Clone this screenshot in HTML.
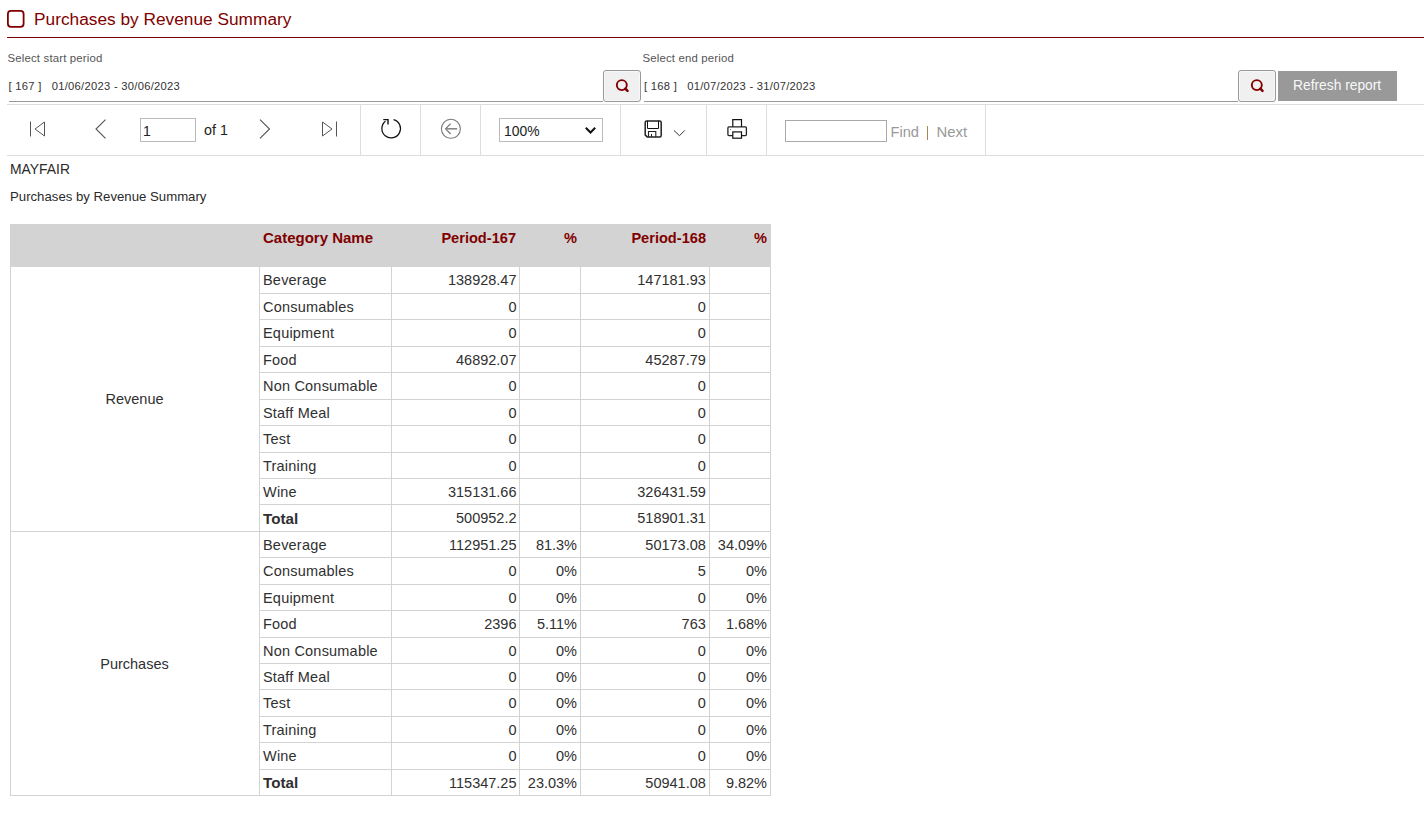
<!DOCTYPE html>
<html><head><meta charset="utf-8"><title>Purchases by Revenue Summary</title>
<style>
html,body{margin:0;padding:0;background:#fff;}
body{width:1424px;height:826px;position:relative;overflow:hidden;font-family:"Liberation Sans", sans-serif;}
</style></head><body>
<svg style="position:absolute;left:0px;top:0px" width="30" height="32" viewBox="0 0 30 32"><rect x="7.9" y="10.9" width="15.7" height="15.9" rx="3" fill="none" stroke="#800000" stroke-width="1.8"/></svg>
<div style="position:absolute;left:34px;top:11.36px;font-size:17.3px;line-height:17.3px;color:#800000;font-weight:normal;white-space:pre;">Purchases by Revenue Summary</div>
<div style="position:absolute;left:7px;top:37px;width:1417px;height:1px;background:#800000;"></div>
<div style="position:absolute;left:7.5px;top:53.35px;font-size:11.4px;line-height:11.4px;color:#555;font-weight:normal;white-space:pre;letter-spacing:0.17px;">Select start period</div>
<div style="position:absolute;left:8.5px;top:80.52px;font-size:11.2px;line-height:11.2px;color:#333;font-weight:normal;white-space:pre;letter-spacing:0.28px;">[ 167 ]   01/06/2023 - 30/06/2023</div>
<div style="position:absolute;left:9px;top:101px;width:594px;height:1px;background:#999;"></div>
<div style="position:absolute;left:603px;top:70px;width:36px;height:30px;border:1px solid #999;border-radius:3px;background:#f0f0f0;box-shadow:inset 0 0 0 1px #f8f8f8;"></div>
<svg style="position:absolute;left:603px;top:70px" width="38" height="32" viewBox="0 0 38 32"><circle cx="18.799999999999955" cy="15.099999999999994" r="5.0" fill="none" stroke="#800000" stroke-width="1.9"/><line x1="22.399999999999956" y1="18.699999999999996" x2="24.499999999999954" y2="20.799999999999994" stroke="#800000" stroke-width="2.6" stroke-linecap="round"/></svg>
<div style="position:absolute;left:642.5px;top:53.35px;font-size:11.4px;line-height:11.4px;color:#555;font-weight:normal;white-space:pre;letter-spacing:0.17px;">Select end period</div>
<div style="position:absolute;left:644px;top:80.52px;font-size:11.2px;line-height:11.2px;color:#333;font-weight:normal;white-space:pre;letter-spacing:0.28px;">[ 168 ]   01/07/2023 - 31/07/2023</div>
<div style="position:absolute;left:644px;top:101px;width:594px;height:1px;background:#999;"></div>
<div style="position:absolute;left:1238px;top:70px;width:36px;height:30px;border:1px solid #999;border-radius:3px;background:#f0f0f0;box-shadow:inset 0 0 0 1px #f8f8f8;"></div>
<svg style="position:absolute;left:1238px;top:70px" width="38" height="32" viewBox="0 0 38 32"><circle cx="18.799999999999955" cy="15.099999999999994" r="5.0" fill="none" stroke="#800000" stroke-width="1.9"/><line x1="22.399999999999956" y1="18.699999999999996" x2="24.499999999999954" y2="20.799999999999994" stroke="#800000" stroke-width="2.6" stroke-linecap="round"/></svg>
<div style="position:absolute;left:1278px;top:71px;width:119px;height:30px;background:#999;"></div>
<div style="position:absolute;left:1293px;top:79.02px;font-size:13.8px;line-height:13.8px;color:#f8f8f8;font-weight:normal;white-space:pre;">Refresh report</div>
<div style="position:absolute;left:7px;top:104px;width:1417px;height:1px;background:#ddd;"></div>
<div style="position:absolute;left:7px;top:155px;width:1417px;height:1px;background:#ddd;"></div>
<div style="position:absolute;left:360px;top:105px;width:1px;height:50px;background:#ddd;"></div>
<div style="position:absolute;left:420px;top:105px;width:1px;height:50px;background:#ddd;"></div>
<div style="position:absolute;left:480px;top:105px;width:1px;height:50px;background:#ddd;"></div>
<div style="position:absolute;left:620px;top:105px;width:1px;height:50px;background:#ddd;"></div>
<div style="position:absolute;left:706px;top:105px;width:1px;height:50px;background:#ddd;"></div>
<div style="position:absolute;left:766px;top:105px;width:1px;height:50px;background:#ddd;"></div>
<div style="position:absolute;left:985px;top:105px;width:1px;height:50px;background:#ddd;"></div>
<svg style="position:absolute;left:20px;top:110px" width="40" height="40" viewBox="0 0 40 40"><line x1="10.5" y1="11.5" x2="10.5" y2="26.5" stroke="#555" stroke-width="1"/><path d="M24.5 12 L15 19 L24.5 26 Z" fill="none" stroke="#555" stroke-width="1"/></svg>
<svg style="position:absolute;left:85px;top:110px" width="30" height="40" viewBox="0 0 30 40"><path d="M20.5 9.6 L11 19 L20.5 28.3" fill="none" stroke="#555" stroke-width="1.1"/></svg>
<svg style="position:absolute;left:250px;top:110px" width="30" height="40" viewBox="0 0 30 40"><path d="M10 9.6 L19.5 19 L10 28.3" fill="none" stroke="#555" stroke-width="1.1"/></svg>
<svg style="position:absolute;left:310px;top:110px" width="40" height="40" viewBox="0 0 40 40"><path d="M12.5 12 L22 19 L12.5 26 Z" fill="none" stroke="#555" stroke-width="1"/><line x1="26.5" y1="11.5" x2="26.5" y2="26.5" stroke="#555" stroke-width="1"/></svg>
<div style="position:absolute;left:140px;top:118px;width:54px;height:22px;border:1px solid #bbb;background:#fff;"></div>
<div style="position:absolute;left:143px;top:123.65px;font-size:14px;line-height:14px;color:#222;font-weight:normal;white-space:pre;">1</div>
<div style="position:absolute;left:204px;top:123.40px;font-size:14.3px;line-height:14.3px;color:#222;font-weight:normal;white-space:pre;">of 1</div>
<svg style="position:absolute;left:371px;top:109px" width="40" height="40" viewBox="0 0 40 40"><path d="M22.6 10.6 A9.3 9.3 0 1 1 14.5 12.2" fill="none" stroke="#111" stroke-width="1.25"/><path d="M12.3 10.6 L17 10.6 L17 15.5" fill="none" stroke="#111" stroke-width="1.4"/></svg>
<svg style="position:absolute;left:431px;top:109px" width="40" height="40" viewBox="0 0 40 40"><circle cx="19.9" cy="19.8" r="9.5" fill="none" stroke="#777" stroke-width="1.1"/><path d="M19.6 14.6 L14.6 19.8 L19.6 25" fill="none" stroke="#777" stroke-width="1.2"/><line x1="14.8" y1="19.8" x2="26.2" y2="19.8" stroke="#888" stroke-width="1.6"/></svg>
<div style="position:absolute;left:499px;top:118px;width:102px;height:22px;border:1px solid #bbb;background:#fff;"></div>
<div style="position:absolute;left:504px;top:124.53px;font-size:13.9px;line-height:13.9px;color:#222;font-weight:normal;white-space:pre;">100%</div>
<svg style="position:absolute;left:580px;top:120px" width="20" height="20" viewBox="0 0 20 20"><path d="M5.8 7.8 L10.5 12.5 L15.2 7.8" fill="none" stroke="#111" stroke-width="2"/></svg>
<svg style="position:absolute;left:640px;top:115px" width="26" height="26" viewBox="0 0 26 26"><path d="M6.7 5.9 H19.7 Q21.2 5.9 21.2 7.4 V20.4 Q21.2 21.9 19.7 21.9 H7.2 L5.2 19.9 V7.4 Q5.2 5.9 6.7 5.9 Z" fill="none" stroke="#222" stroke-width="1.5"/><path d="M7.5 5.9 V13.5 H18.5 V5.9" fill="none" stroke="#111" stroke-width="1"/><path d="M8.5 21.9 V16.5 H15.8 V21.9" fill="none" stroke="#222" stroke-width="1.1"/><line x1="11.5" y1="19" x2="11.5" y2="21.9" stroke="#222" stroke-width="1"/></svg>
<svg style="position:absolute;left:670px;top:125px" width="20" height="15" viewBox="0 0 20 15"><path d="M3.9 5.4 L9.5 10.7 L14.8 5.4" fill="none" stroke="#333" stroke-width="1"/></svg>
<svg style="position:absolute;left:720px;top:113px" width="35" height="30" viewBox="0 0 35 30"><path d="M12.8 13.9 V6.6 H21.5 V13.9" fill="none" stroke="#111" stroke-width="1.2"/><rect x="7.9" y="13.9" width="18.5" height="8.7" rx="1" fill="none" stroke="#222" stroke-width="1.3"/><rect x="12.8" y="18.9" width="8.7" height="6.3" fill="#fff" stroke="#111" stroke-width="1.2"/><circle cx="10.5" cy="16.5" r="0.5" fill="#555"/></svg>
<div style="position:absolute;left:785px;top:120px;width:100px;height:20px;border:1px solid #aaa;background:#fff;"></div>
<div style="position:absolute;left:890.5px;top:125.14px;font-size:14.6px;line-height:14.6px;color:#999;font-weight:normal;white-space:pre;">Find</div>
<div style="position:absolute;left:927px;top:126px;width:1.3px;height:13.5px;background:#a88850;"></div>
<div style="position:absolute;left:936.5px;top:124.89px;font-size:14.9px;line-height:14.9px;color:#999;font-weight:normal;white-space:pre;">Next</div>
<div style="position:absolute;left:10px;top:162.73px;font-size:13.9px;line-height:13.9px;color:#2a2a2a;font-weight:normal;white-space:pre;">MAYFAIR</div>
<div style="position:absolute;left:10px;top:190.33px;font-size:13.2px;line-height:13.2px;color:#2a2a2a;font-weight:normal;white-space:pre;">Purchases by Revenue Summary</div>
<div style="position:absolute;left:10px;top:224px;width:761px;height:43px;background:#d3d3d3;"></div>
<div style="position:absolute;left:259px;top:293px;width:512px;height:1px;background:#d3d3d3;"></div>
<div style="position:absolute;left:259px;top:319px;width:512px;height:1px;background:#d3d3d3;"></div>
<div style="position:absolute;left:259px;top:346px;width:512px;height:1px;background:#d3d3d3;"></div>
<div style="position:absolute;left:259px;top:372px;width:512px;height:1px;background:#d3d3d3;"></div>
<div style="position:absolute;left:259px;top:399px;width:512px;height:1px;background:#d3d3d3;"></div>
<div style="position:absolute;left:259px;top:425px;width:512px;height:1px;background:#d3d3d3;"></div>
<div style="position:absolute;left:259px;top:452px;width:512px;height:1px;background:#d3d3d3;"></div>
<div style="position:absolute;left:259px;top:478px;width:512px;height:1px;background:#d3d3d3;"></div>
<div style="position:absolute;left:259px;top:504px;width:512px;height:1px;background:#d3d3d3;"></div>
<div style="position:absolute;left:10px;top:531px;width:761px;height:1px;background:#d3d3d3;"></div>
<div style="position:absolute;left:259px;top:557px;width:512px;height:1px;background:#d3d3d3;"></div>
<div style="position:absolute;left:259px;top:584px;width:512px;height:1px;background:#d3d3d3;"></div>
<div style="position:absolute;left:259px;top:610px;width:512px;height:1px;background:#d3d3d3;"></div>
<div style="position:absolute;left:259px;top:637px;width:512px;height:1px;background:#d3d3d3;"></div>
<div style="position:absolute;left:259px;top:663px;width:512px;height:1px;background:#d3d3d3;"></div>
<div style="position:absolute;left:259px;top:689px;width:512px;height:1px;background:#d3d3d3;"></div>
<div style="position:absolute;left:259px;top:716px;width:512px;height:1px;background:#d3d3d3;"></div>
<div style="position:absolute;left:259px;top:742px;width:512px;height:1px;background:#d3d3d3;"></div>
<div style="position:absolute;left:259px;top:769px;width:512px;height:1px;background:#d3d3d3;"></div>
<div style="position:absolute;left:10px;top:795px;width:761px;height:1px;background:#d3d3d3;"></div>
<div style="position:absolute;left:10px;top:267px;width:1px;height:529px;background:#d3d3d3;"></div>
<div style="position:absolute;left:259px;top:267px;width:1px;height:529px;background:#d3d3d3;"></div>
<div style="position:absolute;left:391px;top:267px;width:1px;height:529px;background:#d3d3d3;"></div>
<div style="position:absolute;left:519px;top:267px;width:1px;height:529px;background:#d3d3d3;"></div>
<div style="position:absolute;left:580px;top:267px;width:1px;height:529px;background:#d3d3d3;"></div>
<div style="position:absolute;left:709px;top:267px;width:1px;height:529px;background:#d3d3d3;"></div>
<div style="position:absolute;left:770px;top:267px;width:1px;height:529px;background:#d3d3d3;"></div>
<div style="position:absolute;left:263px;top:230.30px;font-size:15.0px;line-height:15.0px;color:#800000;font-weight:bold;white-space:pre;">Category Name</div>
<div style="position:absolute;right:908px;text-align:right;top:230.64px;font-size:14.6px;line-height:14.6px;color:#800000;font-weight:bold;white-space:pre;">Period-167</div>
<div style="position:absolute;right:847px;text-align:right;top:230.64px;font-size:14.6px;line-height:14.6px;color:#800000;font-weight:bold;white-space:pre;">%</div>
<div style="position:absolute;right:718px;text-align:right;top:230.64px;font-size:14.6px;line-height:14.6px;color:#800000;font-weight:bold;white-space:pre;">Period-168</div>
<div style="position:absolute;right:657px;text-align:right;top:230.64px;font-size:14.6px;line-height:14.6px;color:#800000;font-weight:bold;white-space:pre;">%</div>
<div style="position:absolute;left:263px;top:273.43px;font-size:14.5px;line-height:14.5px;color:#303030;font-weight:normal;white-space:pre;letter-spacing:0.2px;">Beverage</div>
<div style="position:absolute;right:907.5px;text-align:right;top:273.43px;font-size:14.5px;line-height:14.5px;color:#303030;font-weight:normal;white-space:pre;">138928.47</div>
<div style="position:absolute;right:847px;text-align:right;top:273.43px;font-size:14.5px;line-height:14.5px;color:#303030;font-weight:normal;white-space:pre;"></div>
<div style="position:absolute;right:718.2px;text-align:right;top:273.43px;font-size:14.5px;line-height:14.5px;color:#303030;font-weight:normal;white-space:pre;">147181.93</div>
<div style="position:absolute;right:657px;text-align:right;top:273.43px;font-size:14.5px;line-height:14.5px;color:#303030;font-weight:normal;white-space:pre;"></div>
<div style="position:absolute;left:263px;top:299.93px;font-size:14.5px;line-height:14.5px;color:#303030;font-weight:normal;white-space:pre;letter-spacing:0.2px;">Consumables</div>
<div style="position:absolute;right:907.5px;text-align:right;top:299.93px;font-size:14.5px;line-height:14.5px;color:#303030;font-weight:normal;white-space:pre;">0</div>
<div style="position:absolute;right:847px;text-align:right;top:299.93px;font-size:14.5px;line-height:14.5px;color:#303030;font-weight:normal;white-space:pre;"></div>
<div style="position:absolute;right:718.2px;text-align:right;top:299.93px;font-size:14.5px;line-height:14.5px;color:#303030;font-weight:normal;white-space:pre;">0</div>
<div style="position:absolute;right:657px;text-align:right;top:299.93px;font-size:14.5px;line-height:14.5px;color:#303030;font-weight:normal;white-space:pre;"></div>
<div style="position:absolute;left:263px;top:326.43px;font-size:14.5px;line-height:14.5px;color:#303030;font-weight:normal;white-space:pre;letter-spacing:0.2px;">Equipment</div>
<div style="position:absolute;right:907.5px;text-align:right;top:326.43px;font-size:14.5px;line-height:14.5px;color:#303030;font-weight:normal;white-space:pre;">0</div>
<div style="position:absolute;right:847px;text-align:right;top:326.43px;font-size:14.5px;line-height:14.5px;color:#303030;font-weight:normal;white-space:pre;"></div>
<div style="position:absolute;right:718.2px;text-align:right;top:326.43px;font-size:14.5px;line-height:14.5px;color:#303030;font-weight:normal;white-space:pre;">0</div>
<div style="position:absolute;right:657px;text-align:right;top:326.43px;font-size:14.5px;line-height:14.5px;color:#303030;font-weight:normal;white-space:pre;"></div>
<div style="position:absolute;left:263px;top:352.93px;font-size:14.5px;line-height:14.5px;color:#303030;font-weight:normal;white-space:pre;letter-spacing:0.2px;">Food</div>
<div style="position:absolute;right:907.5px;text-align:right;top:352.93px;font-size:14.5px;line-height:14.5px;color:#303030;font-weight:normal;white-space:pre;">46892.07</div>
<div style="position:absolute;right:847px;text-align:right;top:352.93px;font-size:14.5px;line-height:14.5px;color:#303030;font-weight:normal;white-space:pre;"></div>
<div style="position:absolute;right:718.2px;text-align:right;top:352.93px;font-size:14.5px;line-height:14.5px;color:#303030;font-weight:normal;white-space:pre;">45287.79</div>
<div style="position:absolute;right:657px;text-align:right;top:352.93px;font-size:14.5px;line-height:14.5px;color:#303030;font-weight:normal;white-space:pre;"></div>
<div style="position:absolute;left:263px;top:379.43px;font-size:14.5px;line-height:14.5px;color:#303030;font-weight:normal;white-space:pre;letter-spacing:0.2px;">Non Consumable</div>
<div style="position:absolute;right:907.5px;text-align:right;top:379.43px;font-size:14.5px;line-height:14.5px;color:#303030;font-weight:normal;white-space:pre;">0</div>
<div style="position:absolute;right:847px;text-align:right;top:379.43px;font-size:14.5px;line-height:14.5px;color:#303030;font-weight:normal;white-space:pre;"></div>
<div style="position:absolute;right:718.2px;text-align:right;top:379.43px;font-size:14.5px;line-height:14.5px;color:#303030;font-weight:normal;white-space:pre;">0</div>
<div style="position:absolute;right:657px;text-align:right;top:379.43px;font-size:14.5px;line-height:14.5px;color:#303030;font-weight:normal;white-space:pre;"></div>
<div style="position:absolute;left:263px;top:405.93px;font-size:14.5px;line-height:14.5px;color:#303030;font-weight:normal;white-space:pre;letter-spacing:0.2px;">Staff Meal</div>
<div style="position:absolute;right:907.5px;text-align:right;top:405.93px;font-size:14.5px;line-height:14.5px;color:#303030;font-weight:normal;white-space:pre;">0</div>
<div style="position:absolute;right:847px;text-align:right;top:405.93px;font-size:14.5px;line-height:14.5px;color:#303030;font-weight:normal;white-space:pre;"></div>
<div style="position:absolute;right:718.2px;text-align:right;top:405.93px;font-size:14.5px;line-height:14.5px;color:#303030;font-weight:normal;white-space:pre;">0</div>
<div style="position:absolute;right:657px;text-align:right;top:405.93px;font-size:14.5px;line-height:14.5px;color:#303030;font-weight:normal;white-space:pre;"></div>
<div style="position:absolute;left:263px;top:432.43px;font-size:14.5px;line-height:14.5px;color:#303030;font-weight:normal;white-space:pre;letter-spacing:0.2px;">Test</div>
<div style="position:absolute;right:907.5px;text-align:right;top:432.43px;font-size:14.5px;line-height:14.5px;color:#303030;font-weight:normal;white-space:pre;">0</div>
<div style="position:absolute;right:847px;text-align:right;top:432.43px;font-size:14.5px;line-height:14.5px;color:#303030;font-weight:normal;white-space:pre;"></div>
<div style="position:absolute;right:718.2px;text-align:right;top:432.43px;font-size:14.5px;line-height:14.5px;color:#303030;font-weight:normal;white-space:pre;">0</div>
<div style="position:absolute;right:657px;text-align:right;top:432.43px;font-size:14.5px;line-height:14.5px;color:#303030;font-weight:normal;white-space:pre;"></div>
<div style="position:absolute;left:263px;top:458.93px;font-size:14.5px;line-height:14.5px;color:#303030;font-weight:normal;white-space:pre;letter-spacing:0.2px;">Training</div>
<div style="position:absolute;right:907.5px;text-align:right;top:458.93px;font-size:14.5px;line-height:14.5px;color:#303030;font-weight:normal;white-space:pre;">0</div>
<div style="position:absolute;right:847px;text-align:right;top:458.93px;font-size:14.5px;line-height:14.5px;color:#303030;font-weight:normal;white-space:pre;"></div>
<div style="position:absolute;right:718.2px;text-align:right;top:458.93px;font-size:14.5px;line-height:14.5px;color:#303030;font-weight:normal;white-space:pre;">0</div>
<div style="position:absolute;right:657px;text-align:right;top:458.93px;font-size:14.5px;line-height:14.5px;color:#303030;font-weight:normal;white-space:pre;"></div>
<div style="position:absolute;left:263px;top:484.93px;font-size:14.5px;line-height:14.5px;color:#303030;font-weight:normal;white-space:pre;letter-spacing:0.2px;">Wine</div>
<div style="position:absolute;right:907.5px;text-align:right;top:484.93px;font-size:14.5px;line-height:14.5px;color:#303030;font-weight:normal;white-space:pre;">315131.66</div>
<div style="position:absolute;right:847px;text-align:right;top:484.93px;font-size:14.5px;line-height:14.5px;color:#303030;font-weight:normal;white-space:pre;"></div>
<div style="position:absolute;right:718.2px;text-align:right;top:484.93px;font-size:14.5px;line-height:14.5px;color:#303030;font-weight:normal;white-space:pre;">326431.59</div>
<div style="position:absolute;right:657px;text-align:right;top:484.93px;font-size:14.5px;line-height:14.5px;color:#303030;font-weight:normal;white-space:pre;"></div>
<div style="position:absolute;left:263px;top:510.83px;font-size:15.2px;line-height:15.2px;color:#303030;font-weight:bold;white-space:pre;">Total</div>
<div style="position:absolute;right:907.5px;text-align:right;top:511.43px;font-size:14.5px;line-height:14.5px;color:#303030;font-weight:normal;white-space:pre;">500952.2</div>
<div style="position:absolute;right:847px;text-align:right;top:511.43px;font-size:14.5px;line-height:14.5px;color:#303030;font-weight:normal;white-space:pre;"></div>
<div style="position:absolute;right:718.2px;text-align:right;top:511.43px;font-size:14.5px;line-height:14.5px;color:#303030;font-weight:normal;white-space:pre;">518901.31</div>
<div style="position:absolute;right:657px;text-align:right;top:511.43px;font-size:14.5px;line-height:14.5px;color:#303030;font-weight:normal;white-space:pre;"></div>
<div style="position:absolute;left:263px;top:537.93px;font-size:14.5px;line-height:14.5px;color:#303030;font-weight:normal;white-space:pre;letter-spacing:0.2px;">Beverage</div>
<div style="position:absolute;right:907.5px;text-align:right;top:537.93px;font-size:14.5px;line-height:14.5px;color:#303030;font-weight:normal;white-space:pre;">112951.25</div>
<div style="position:absolute;right:847px;text-align:right;top:537.93px;font-size:14.5px;line-height:14.5px;color:#303030;font-weight:normal;white-space:pre;">81.3%</div>
<div style="position:absolute;right:718.2px;text-align:right;top:537.93px;font-size:14.5px;line-height:14.5px;color:#303030;font-weight:normal;white-space:pre;">50173.08</div>
<div style="position:absolute;right:657px;text-align:right;top:537.93px;font-size:14.5px;line-height:14.5px;color:#303030;font-weight:normal;white-space:pre;">34.09%</div>
<div style="position:absolute;left:263px;top:564.43px;font-size:14.5px;line-height:14.5px;color:#303030;font-weight:normal;white-space:pre;letter-spacing:0.2px;">Consumables</div>
<div style="position:absolute;right:907.5px;text-align:right;top:564.43px;font-size:14.5px;line-height:14.5px;color:#303030;font-weight:normal;white-space:pre;">0</div>
<div style="position:absolute;right:847px;text-align:right;top:564.43px;font-size:14.5px;line-height:14.5px;color:#303030;font-weight:normal;white-space:pre;">0%</div>
<div style="position:absolute;right:718.2px;text-align:right;top:564.43px;font-size:14.5px;line-height:14.5px;color:#303030;font-weight:normal;white-space:pre;">5</div>
<div style="position:absolute;right:657px;text-align:right;top:564.43px;font-size:14.5px;line-height:14.5px;color:#303030;font-weight:normal;white-space:pre;">0%</div>
<div style="position:absolute;left:263px;top:590.93px;font-size:14.5px;line-height:14.5px;color:#303030;font-weight:normal;white-space:pre;letter-spacing:0.2px;">Equipment</div>
<div style="position:absolute;right:907.5px;text-align:right;top:590.93px;font-size:14.5px;line-height:14.5px;color:#303030;font-weight:normal;white-space:pre;">0</div>
<div style="position:absolute;right:847px;text-align:right;top:590.93px;font-size:14.5px;line-height:14.5px;color:#303030;font-weight:normal;white-space:pre;">0%</div>
<div style="position:absolute;right:718.2px;text-align:right;top:590.93px;font-size:14.5px;line-height:14.5px;color:#303030;font-weight:normal;white-space:pre;">0</div>
<div style="position:absolute;right:657px;text-align:right;top:590.93px;font-size:14.5px;line-height:14.5px;color:#303030;font-weight:normal;white-space:pre;">0%</div>
<div style="position:absolute;left:263px;top:617.43px;font-size:14.5px;line-height:14.5px;color:#303030;font-weight:normal;white-space:pre;letter-spacing:0.2px;">Food</div>
<div style="position:absolute;right:907.5px;text-align:right;top:617.43px;font-size:14.5px;line-height:14.5px;color:#303030;font-weight:normal;white-space:pre;">2396</div>
<div style="position:absolute;right:847px;text-align:right;top:617.43px;font-size:14.5px;line-height:14.5px;color:#303030;font-weight:normal;white-space:pre;">5.11%</div>
<div style="position:absolute;right:718.2px;text-align:right;top:617.43px;font-size:14.5px;line-height:14.5px;color:#303030;font-weight:normal;white-space:pre;">763</div>
<div style="position:absolute;right:657px;text-align:right;top:617.43px;font-size:14.5px;line-height:14.5px;color:#303030;font-weight:normal;white-space:pre;">1.68%</div>
<div style="position:absolute;left:263px;top:643.93px;font-size:14.5px;line-height:14.5px;color:#303030;font-weight:normal;white-space:pre;letter-spacing:0.2px;">Non Consumable</div>
<div style="position:absolute;right:907.5px;text-align:right;top:643.93px;font-size:14.5px;line-height:14.5px;color:#303030;font-weight:normal;white-space:pre;">0</div>
<div style="position:absolute;right:847px;text-align:right;top:643.93px;font-size:14.5px;line-height:14.5px;color:#303030;font-weight:normal;white-space:pre;">0%</div>
<div style="position:absolute;right:718.2px;text-align:right;top:643.93px;font-size:14.5px;line-height:14.5px;color:#303030;font-weight:normal;white-space:pre;">0</div>
<div style="position:absolute;right:657px;text-align:right;top:643.93px;font-size:14.5px;line-height:14.5px;color:#303030;font-weight:normal;white-space:pre;">0%</div>
<div style="position:absolute;left:263px;top:669.93px;font-size:14.5px;line-height:14.5px;color:#303030;font-weight:normal;white-space:pre;letter-spacing:0.2px;">Staff Meal</div>
<div style="position:absolute;right:907.5px;text-align:right;top:669.93px;font-size:14.5px;line-height:14.5px;color:#303030;font-weight:normal;white-space:pre;">0</div>
<div style="position:absolute;right:847px;text-align:right;top:669.93px;font-size:14.5px;line-height:14.5px;color:#303030;font-weight:normal;white-space:pre;">0%</div>
<div style="position:absolute;right:718.2px;text-align:right;top:669.93px;font-size:14.5px;line-height:14.5px;color:#303030;font-weight:normal;white-space:pre;">0</div>
<div style="position:absolute;right:657px;text-align:right;top:669.93px;font-size:14.5px;line-height:14.5px;color:#303030;font-weight:normal;white-space:pre;">0%</div>
<div style="position:absolute;left:263px;top:696.43px;font-size:14.5px;line-height:14.5px;color:#303030;font-weight:normal;white-space:pre;letter-spacing:0.2px;">Test</div>
<div style="position:absolute;right:907.5px;text-align:right;top:696.43px;font-size:14.5px;line-height:14.5px;color:#303030;font-weight:normal;white-space:pre;">0</div>
<div style="position:absolute;right:847px;text-align:right;top:696.43px;font-size:14.5px;line-height:14.5px;color:#303030;font-weight:normal;white-space:pre;">0%</div>
<div style="position:absolute;right:718.2px;text-align:right;top:696.43px;font-size:14.5px;line-height:14.5px;color:#303030;font-weight:normal;white-space:pre;">0</div>
<div style="position:absolute;right:657px;text-align:right;top:696.43px;font-size:14.5px;line-height:14.5px;color:#303030;font-weight:normal;white-space:pre;">0%</div>
<div style="position:absolute;left:263px;top:722.93px;font-size:14.5px;line-height:14.5px;color:#303030;font-weight:normal;white-space:pre;letter-spacing:0.2px;">Training</div>
<div style="position:absolute;right:907.5px;text-align:right;top:722.93px;font-size:14.5px;line-height:14.5px;color:#303030;font-weight:normal;white-space:pre;">0</div>
<div style="position:absolute;right:847px;text-align:right;top:722.93px;font-size:14.5px;line-height:14.5px;color:#303030;font-weight:normal;white-space:pre;">0%</div>
<div style="position:absolute;right:718.2px;text-align:right;top:722.93px;font-size:14.5px;line-height:14.5px;color:#303030;font-weight:normal;white-space:pre;">0</div>
<div style="position:absolute;right:657px;text-align:right;top:722.93px;font-size:14.5px;line-height:14.5px;color:#303030;font-weight:normal;white-space:pre;">0%</div>
<div style="position:absolute;left:263px;top:749.43px;font-size:14.5px;line-height:14.5px;color:#303030;font-weight:normal;white-space:pre;letter-spacing:0.2px;">Wine</div>
<div style="position:absolute;right:907.5px;text-align:right;top:749.43px;font-size:14.5px;line-height:14.5px;color:#303030;font-weight:normal;white-space:pre;">0</div>
<div style="position:absolute;right:847px;text-align:right;top:749.43px;font-size:14.5px;line-height:14.5px;color:#303030;font-weight:normal;white-space:pre;">0%</div>
<div style="position:absolute;right:718.2px;text-align:right;top:749.43px;font-size:14.5px;line-height:14.5px;color:#303030;font-weight:normal;white-space:pre;">0</div>
<div style="position:absolute;right:657px;text-align:right;top:749.43px;font-size:14.5px;line-height:14.5px;color:#303030;font-weight:normal;white-space:pre;">0%</div>
<div style="position:absolute;left:263px;top:775.33px;font-size:15.2px;line-height:15.2px;color:#303030;font-weight:bold;white-space:pre;">Total</div>
<div style="position:absolute;right:907.5px;text-align:right;top:775.93px;font-size:14.5px;line-height:14.5px;color:#303030;font-weight:normal;white-space:pre;">115347.25</div>
<div style="position:absolute;right:847px;text-align:right;top:775.93px;font-size:14.5px;line-height:14.5px;color:#303030;font-weight:normal;white-space:pre;">23.03%</div>
<div style="position:absolute;right:718.2px;text-align:right;top:775.93px;font-size:14.5px;line-height:14.5px;color:#303030;font-weight:normal;white-space:pre;">50941.08</div>
<div style="position:absolute;right:657px;text-align:right;top:775.93px;font-size:14.5px;line-height:14.5px;color:#303030;font-weight:normal;white-space:pre;">9.82%</div>
<div style="position:absolute;left:-165.5px;width:600px;text-align:center;top:391.53px;font-size:14.5px;line-height:14.5px;color:#303030;font-weight:normal;white-space:pre;">Revenue</div>
<div style="position:absolute;left:-165.5px;width:600px;text-align:center;top:656.53px;font-size:14.5px;line-height:14.5px;color:#303030;font-weight:normal;white-space:pre;">Purchases</div>
</body></html>
